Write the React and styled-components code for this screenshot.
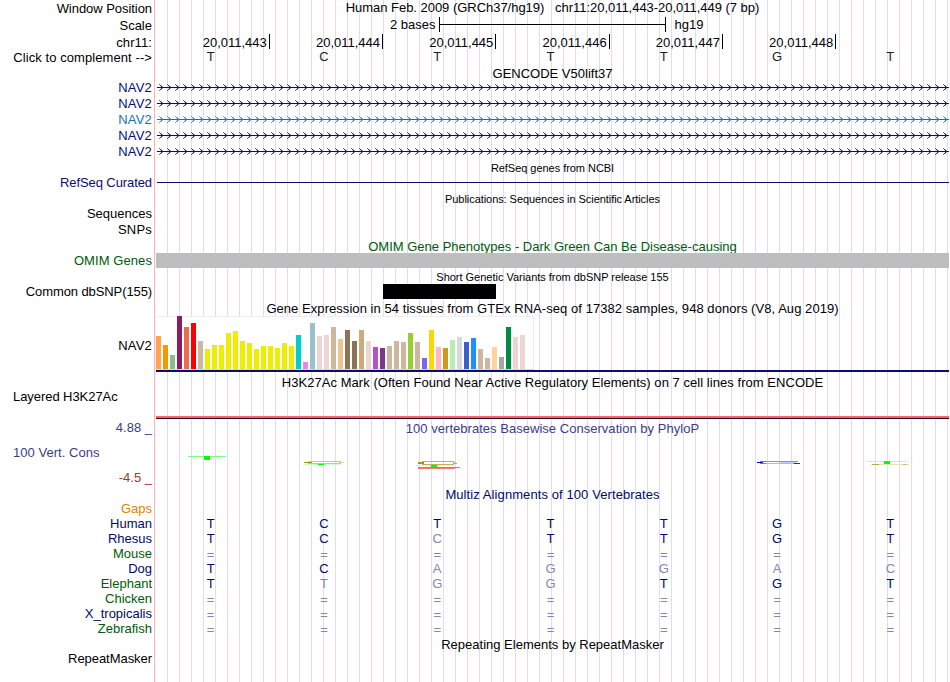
import React from 'react';
import styled, { createGlobalStyle } from 'styled-components';

const NAVY = '#0c0c78';
const BLUE = '#1474b0';
const GREEN = '#005a0a';
const SPECIES = '#000a64';

const GlobalStyle = createGlobalStyle`
    body {
        margin: 0;
        background: #fff;
    }
`;

const Browser = styled.div`
    width: 949px;
    height: 682px;
    overflow: hidden;
    font-family: 'Liberation Sans', Arial, sans-serif;
    font-size: 13px;
    color: #000;
    white-space: pre;
    background:
        linear-gradient(#ffb4b4, #ffb4b4) 154px 0 / 1px 100% no-repeat,
        repeating-linear-gradient(to right, #dcdcff 0, #dcdcff 1px, transparent 1px, transparent 12px) 167px 0 no-repeat;
`;

const Row = styled.div`
    display: flex;
    height: ${(p) => p.$h}px;
    margin-bottom: ${(p) => p.$gap || 0}px;
`;

const Label = styled.div`
    box-sizing: border-box;
    width: 156px;
    flex: none;
    padding: ${(p) => p.$top || 0}px 4px 0 13px;
    line-height: ${(p) => p.$lh || 15}px;
    text-align: ${(p) => (p.$left ? 'left' : 'right')};
    letter-spacing: ${(p) => p.$ls || 0}px;
    color: ${(p) => p.$color || '#000'};
`;

const Data = styled.div`
    flex: 1;
    min-width: 0;
`;

const Title = styled.div`
    flex: 1;
    padding-top: ${(p) => p.$top || 0}px;
    line-height: 15px;
    text-align: center;
    font-size: ${(p) => (p.$small ? 11 : 13)}px;
    letter-spacing: ${(p) => p.$ls || 0}px;
    color: ${(p) => p.$color || '#000'};
`;

const Scale = styled.div`
    display: flex;
    flex: 1;
    padding-left: 234px;
    line-height: 16px;
`;

const ScaleBar = styled.div`
    display: flex;
    align-items: center;
    width: 225px;
    height: 15px;
    margin: 0 9px 0 3px;
    border: solid #000;
    border-width: 0 1px;

    &::before {
        content: '';
        flex: 1;
        height: 1px;
        background: #000;
    }
`;

const Ruler = styled.div`
    display: grid;
    grid-template-columns: repeat(7, 113.286px);
    margin-left: 0.5px;
`;

const Tick = styled.div`
    height: 15px;
    padding-right: 2px;
    border-right: 1px solid #000;
    line-height: 17px;
    text-align: right;
`;

const Bases = styled.div`
    display: grid;
    grid-template-columns: repeat(7, 113.286px);
    margin: ${(p) => p.$top || 0}px 0 0 -2px;
    line-height: 15px;
    text-align: center;
`;

const Base = styled.span`
    padding-top: ${(p) => (p.$gap ? 1 : 0)}px;
    color: ${(p) => p.$color};
`;

const Line = styled.div`
    height: 1px;
    margin: 7px 0 0 1px;
    background: ${NAVY};
`;

const Block = styled.div`
    width: ${(p) => p.$w || '100%'};
    height: 15px;
    margin-left: ${(p) => p.$x || 0}px;
    background: ${(p) => p.$color};
`;

const Expression = styled.div`
    border-bottom: 2px solid ${NAVY};
`;

const ExpressionBox = styled.div`
    box-sizing: border-box;
    display: flex;
    align-items: flex-end;
    gap: 2px;
    width: 378px;
    height: 54px;
    background: #fff;
    box-shadow: inset -1px 1px #eee;
    border-bottom: 1px solid #d8d8d8;
`;

const Bar = styled.div`
    width: 5px;
    flex: none;
`;

const Signal = styled.div`
    height: 2px;
    margin-top: 26px;
    background: #ff6464;
    border-bottom: 1px solid #280028;
`;

const AxisLabels = styled.div`
    display: flex;
    flex-direction: column;
    width: 156px;
    flex: none;
`;

const LogoTrack = styled.div`
    margin-top: -16px;
`;

const TISSUES = [
    [33, '#ffa54f'], [24, '#ee9a00'], [14, '#8fbc8f'], [53, '#8b1c62'], [42, '#ee6a50'], [46, '#ff0000'],
    [28, '#cdb79e'], [20, '#eeee00'], [24, '#eeee00'], [24, '#eeee00'], [36, '#eeee00'], [38, '#eeee00'],
    [28, '#eeee00'], [26, '#eeee00'], [20, '#eeee00'], [23, '#eeee00'], [23, '#eeee00'], [21, '#eeee00'],
    [26, '#eeee00'], [23, '#eeee00'], [34, '#00cdcd'], [7, '#ee82ee'], [46, '#9ac0cd'], [33, '#eed5d2'],
    [34, '#eed5d2'], [42, '#cdb79e'], [30, '#eec591'], [39, '#8b7355'], [28, '#8b7355'], [39, '#cdaa7d'],
    [28, '#eed5d2'], [22, '#b452cd'], [21, '#7a378b'], [23, '#cdb79e'], [28, '#cdb79e'], [27, '#cdb79e'],
    [36, '#9acd32'], [27, '#cdb79e'], [11, '#7a67ee'], [39, '#ffd700'], [22, '#ffb6c1'], [21, '#cd9b1d'],
    [29, '#b4eeb4'], [32, '#d9d9d9'], [27, '#3a5fcd'], [31, '#1e90ff'], [20, '#cdb79e'], [11, '#cdb79e'],
    [22, '#ffd39b'], [12, '#a6a6a6'], [42, '#008b45'], [32, '#eed5d2'], [34, '#eed5d2'], [0, '#ff00ff'],
];

const POSITIONS = ['20,011,443', '20,011,444', '20,011,445', '20,011,446', '20,011,447', '20,011,448'];

const HUMAN = 'TCTTTGT';

const SPECIES_ROWS = [
    ['Human', 'TCTTTGT', SPECIES],
    ['Rhesus', 'TCCTTGT', SPECIES],
    ['Mouse', '=======', GREEN],
    ['Dog', 'TCAGGAC', SPECIES],
    ['Elephant', 'TTGGTGT', GREEN],
    ['Chicken', '=======', GREEN],
    ['X_tropicalis', '=======', SPECIES],
    ['Zebrafish', '=======', GREEN],
];

const GENES = [NAVY, NAVY, BLUE, NAVY, NAVY];

const Transcript = ({ id, color }) => (
    <svg width="793" height="16" display="block" shapeRendering="crispEdges">
        <defs>
            <pattern id={id} x="3" width="8" height="16" patternUnits="userSpaceOnUse">
                <path d="M2 6h1v1h-1z M2 8h1v1h-1z" fill={color} />
                <path d="M1 5h1v1h-1z M1 9h1v1h-1z" fill={color} opacity="0.85" />
                <path d="M3 6h1v1h-1z M3 8h1v1h-1z M2 5h1v1h-1z M2 9h1v1h-1z" fill={color} opacity="0.3" />
                <path d="M0 4h1v1h-1z M0 10h1v1h-1z" fill={color} opacity="0.6" />
            </pattern>
        </defs>
        <rect x="3" width="790" height="16" fill={`url(#${id})`} />
        <rect x="1" y="7" width="792" height="1" fill={color} />
    </svg>
);

// letter heights follow the PhyloP score, so most of them are squashed flat
const Conservation = () => (
    <svg width="793" height="67" viewBox="156 420 793 67" display="block">
        <rect x="188" y="456" width="38" height="1" fill="#7dff7d" />
        <rect x="204" y="456" width="6" height="4" fill="#00ff00" />

        <rect x="303" y="464" width="38" height="1" fill="#d2ffd2" />
        <rect x="308" y="461" width="33" height="1" fill="#cdc882" />
        <rect x="308" y="463" width="33" height="1" fill="#cdc882" />
        <rect x="304" y="462" width="8" height="1" fill="#a09600" />
        <rect x="339" y="462" width="5" height="1" fill="#d7d296" />
        <rect x="318" y="464" width="6" height="1" fill="#00ff00" />

        <rect x="416" y="465" width="38" height="1" fill="#d2ffd2" />
        <rect x="422" y="461" width="32" height="1" fill="#beb450" />
        <rect x="422" y="464" width="32" height="1" fill="#beb450" />
        <rect x="418" y="462" width="6" height="2" fill="#a09600" />
        <rect x="453" y="462" width="3" height="1" fill="#cdc882" />
        <rect x="453" y="463" width="4" height="1" fill="#beb450" />
        <rect x="431" y="465" width="6" height="2" fill="#00ff00" />
        <rect x="418" y="467" width="42" height="1" fill="#8282ff" />
        <rect x="418" y="468" width="37" height="1" fill="#ff7878" />

        <rect x="764" y="461" width="34" height="1" fill="#8c8ce6" />
        <rect x="764" y="463" width="30" height="1" fill="#b4b4ff" />
        <rect x="757" y="462" width="6" height="1" fill="#0000ff" />
        <rect x="760" y="461" width="6" height="1" fill="#6e6eff" />
        <rect x="760" y="463" width="6" height="1" fill="#6e6eff" />
        <rect x="779" y="462" width="17" height="1" fill="#c8c8ff" />
        <rect x="794" y="463" width="6" height="1" fill="#1e1eff" />

        <rect x="868" y="461" width="38" height="1" fill="#b4ffb4" />
        <rect x="871" y="464" width="38" height="1" fill="#e6e1b4" />
        <rect x="872" y="464" width="7" height="1" fill="#b4aa3c" />
        <rect x="903" y="464" width="4" height="1" fill="#c8be6e" />
        <rect x="884" y="461" width="6" height="3" fill="#00ff00" />
    </svg>
);

const BaseRow = ({ seq, top, color, faded }) => (
    <Bases $top={top}>
        {seq.split('').map((b, i) => (
            <Base key={i} $gap={b === '='} $color={faded && b !== HUMAN[i] ? faded : color}>{b}</Base>
        ))}
    </Bases>
);

const App = () => {
    return (
        <Browser>
            <GlobalStyle />
            <Row $h={17}>
                <Label $top={1} $ls={-0.05}>Window Position</Label>
                <Title $ls={-0.03}>Human Feb. 2009 (GRCh37/hg19)   chr11:20,011,443-20,011,449 (7 bp)</Title>
            </Row>
            <Row $h={17}>
                <Label $top={1}>Scale</Label>
                <Scale>
                    2 bases
                    <ScaleBar />
                    hg19
                </Scale>
            </Row>
            <Row $h={17}>
                <Label $top={1} $ls={0.1}>chr11:</Label>
                <Ruler>
                    {POSITIONS.map((p) => (
                        <Tick key={p}>{p}</Tick>
                    ))}
                </Ruler>
            </Row>
            <Row $h={15}>
                <Label $lh={14} $ls={0.08}>{'Click to complement -->'}</Label>
                <BaseRow seq={HUMAN} top={-2} color="#1e1e1e" />
            </Row>
            <Row $h={14}>
                <Label />
                <Title>GENCODE V50lift37</Title>
            </Row>
            {GENES.map((color, i) => (
                <Row $h={16} key={i}>
                    <Label $color={color} $ls={0.2}>NAV2</Label>
                    <Transcript id={`exon${i}`} color={color} />
                </Row>
            ))}
            <Row $h={15}>
                <Label />
                <Title $small $top={1} $ls={-0.04}>RefSeq genes from NCBI</Title>
            </Row>
            <Row $h={16}>
                <Label $color={NAVY} $ls={-0.09}>RefSeq Curated</Label>
                <Data>
                    <Line />
                </Data>
            </Row>
            <Row $h={15}>
                <Label />
                <Title $small $top={1} $ls={-0.06}>Publications: Sequences in Scientific Articles</Title>
            </Row>
            <Row $h={16}>
                <Label>Sequences</Label>
            </Row>
            <Row $h={16}>
                <Label $ls={0.2}>SNPs</Label>
            </Row>
            <Row $h={15}>
                <Label />
                <Title $color={GREEN} $top={1}>OMIM Gene Phenotypes - Dark Green Can Be Disease-causing</Title>
            </Row>
            <Row $h={15} $gap={1}>
                <Label $color={GREEN} $ls={0.08}>OMIM Genes</Label>
                <Data>
                    <Block $color="#bebebe" />
                </Data>
            </Row>
            <Row $h={15}>
                <Label />
                <Title $small $top={1} $ls={-0.02}>Short Genetic Variants from dbSNP release 155</Title>
            </Row>
            <Row $h={15} $gap={2}>
                <Label $ls={-0.1}>Common dbSNP(155)</Label>
                <Data>
                    <Block $color="#000" $x={227} $w="113px" />
                </Data>
            </Row>
            <Row $h={15}>
                <Label />
                <Title $ls={0.055}>Gene Expression in 54 tissues from GTEx RNA-seq of 17382 samples, 948 donors (V8, Aug 2019)</Title>
            </Row>
            <Row $h={56} $gap={3}>
                <Label $lh={60} $ls={0.2}>NAV2</Label>
                <Data>
                    <Expression>
                        <ExpressionBox>
                            {TISSUES.map(([h, color], i) => (
                                <Bar key={i} style={{ height: h, background: color }} />
                            ))}
                        </ExpressionBox>
                    </Expression>
                </Data>
            </Row>
            <Row $h={15}>
                <Label />
                <Title $ls={0.045}>H3K27Ac Mark (Often Found Near Active Regulatory Elements) on 7 cell lines from ENCODE</Title>
            </Row>
            <Row $h={30}>
                <Label $left $lh={13} $ls={-0.06}>Layered H3K27Ac</Label>
                <Data>
                    <Signal />
                </Data>
            </Row>
            <Row $h={67}>
                <AxisLabels>
                    <Label $color="#3c3c8c">4.88 _</Label>
                    <Label $color="#3c3c8c" $left $top={10} $ls={0.04}>100 Vert. Cons</Label>
                    <Label $color="#8c3c3c" $top={10}>-4.5 _</Label>
                </AxisLabels>
                <Data>
                    <Title $color="#3c3c8c" $top={1} $ls={0.03}>100 vertebrates Basewise Conservation by PhyloP</Title>
                    <LogoTrack>
                        <Conservation />
                    </LogoTrack>
                </Data>
            </Row>
            <Row $h={14}>
                <Label />
                <Title $color={SPECIES} $ls={0.09}>Multiz Alignments of 100 Vertebrates</Title>
            </Row>
            <Row $h={15}>
                <Label $color="#e18200">Gaps</Label>
            </Row>
            {SPECIES_ROWS.map(([name, seq, color]) => (
                <Row $h={15} key={name}>
                    <Label $color={color}>{name}</Label>
                    <BaseRow seq={seq} color={SPECIES} faded="#8287b4" />
                </Row>
            ))}
            <Row $h={15}>
                <Label />
                <Title $top={1}>Repeating Elements by RepeatMasker</Title>
            </Row>
            <Row $h={15}>
                <Label $ls={-0.05}>RepeatMasker</Label>
            </Row>
        </Browser>
    );
};

export default App;
